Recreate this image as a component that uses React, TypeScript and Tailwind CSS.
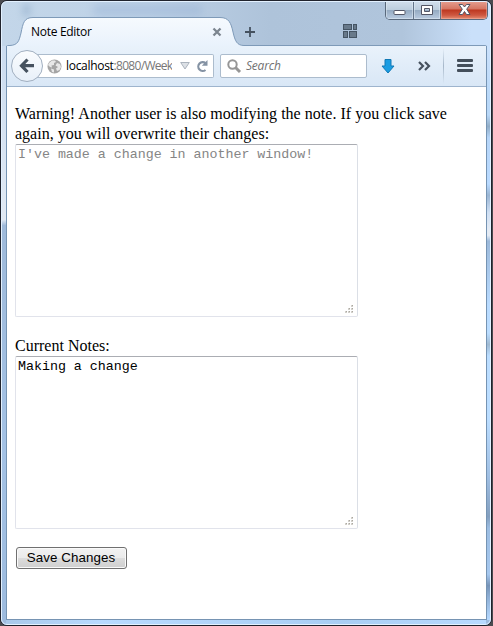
import React from "react";

const uiFont = "font-['Open_Sans','Noto_Sans',sans-serif]";

function Grip() {
  return (
    <svg className="absolute right-[3px] bottom-[2px]" width="9" height="9" shapeRendering="crispEdges">
      {[[6, 0], [3, 3], [6, 3], [0, 6], [3, 6], [6, 6]].map(([x, y]) => (
        <g key={`${x}-${y}`}>
          <rect x={x} y={y} width="2" height="2" fill="#d2d0cb" />
          <rect x={x + 1} y={y} width="1" height="1" fill="#aaa79f" />
        </g>
      ))}
    </svg>
  );
}

function NoteArea({ text, muted }: { text: string; muted?: boolean }) {
  return (
    <div
      className={`relative h-[173px] w-[343px] rounded-[2px] border border-[#e1e3eb] border-t-[#abadb3] border-r-[#dbdfe6] bg-white pt-[2px] pl-[2px] font-['Liberation_Mono',monospace] text-[13.333px] leading-[15px] tracking-[-0.02px] whitespace-pre ${muted ? "text-[#858585]" : "text-black"}`}
    >
      {text}
      <Grip />
    </div>
  );
}

function TabStrip() {
  return (
    <div className="relative h-[46px] shrink-0">
      <div className="absolute top-[5px] left-[94px] h-[10px] w-[108px] bg-[#8fabd3] opacity-40 blur-[4px]" />
      <div className="absolute top-[4px] left-[22px] h-[12px] w-[9px] bg-[#8ba8c7] opacity-40 blur-[3px]" />
      <svg className="absolute inset-0" width="493" height="46" fill="none">
        <defs>
          <linearGradient id="tab" x1="0" y1="0" x2="0" y2="1">
            <stop offset="0" stopColor="#f6fafe" />
            <stop offset="1" stopColor="#e9f2fc" />
          </linearGradient>
        </defs>
        <path d="M7 46 Q7 45.5 10 45.5 C18 45 19 41 21 33 C23 23 24 17.5 33 17.5 H220 C229 17.5 231 23 233 32 C235 41 237 45.5 244 45.5 V46 Z" fill="url(#tab)" />
        <path d="M6.5 46 Q6.5 45.5 10 45.5 C18 45 19 41 21 33 C23 23 24 17.5 33 17.5 H220 C229 17.5 231 23 233 32 C235 41 237 45.5 244 45.5 H484 Q486.500 45.500 486.500 46" stroke="#7e9ab8" />
        <path d="M213.500 28.500 l7 7 M220.500 28.500 l-7 7" stroke="#7c858f" strokeWidth="2.3" />
        <path d="M245 32 h10 M250 27 v10" stroke="#45515f" strokeWidth="1.8" />
        <g fill="#697a8b" stroke="#465564" shapeRendering="crispEdges">
          <rect x="343.500" y="24.500" width="8" height="5" />
          <rect x="353.500" y="24.500" width="3" height="5" />
          <rect x="343.500" y="31.500" width="4" height="6" />
          <rect x="349.500" y="31.500" width="7" height="6" />
        </g>
      </svg>
      <div className={`absolute top-[23px] left-[31px] text-[12px] leading-[18px] tracking-[-0.3px] text-black ${uiFont}`}>Note Editor</div>
      <WindowControls />
    </div>
  );
}

function WindowControls() {
  return (
    <div className="absolute top-0 left-[385px] flex h-[20px] w-[103px] overflow-hidden rounded-b-[5px] border border-t-0 border-[#59697c]">
      <div className="flex w-[28px] items-center justify-center border-r border-[#64758a] bg-[linear-gradient(#d5e1ee_0%,#bdcede_50%,#93a9c0_52%,#b9cbe0_100%)] shadow-[inset_0_0_0_1px_#e4edf680]">
        <svg width="13" height="14"><rect x="1" y="7.500" width="11" height="4" rx="1" fill="#fff" stroke="#535666" /></svg>
      </div>
      <div className="flex w-[27px] items-center justify-center border-r border-[#64758a] bg-[linear-gradient(#d5e1ee_0%,#bdcede_50%,#93a9c0_52%,#b9cbe0_100%)] shadow-[inset_0_0_0_1px_#e4edf680]">
        <svg width="13" height="12"><path d="M.5 1.500 h11 v9 h-11 Z M3.500 4.500 v3 h5 v-3 Z" fill="#fff" fillRule="evenodd" stroke="#535666" /></svg>
      </div>
      <div className="flex flex-1 items-center justify-center bg-[linear-gradient(#e8a698_0%,#d57562_48%,#bd3720_52%,#ce5841_80%,#e58e73_100%)] shadow-[inset_0_0_0_1px_#f3b3a880]">
        <svg width="13" height="11"><path d="M1 .5 h3.500 l2 2.500 2-2.500 H12 L8.700 5.200 12 10.500 H8.500 L6.500 7.500 4.500 10.500 H1 L4.300 5.200 Z" fill="#fff" stroke="#535666" /></svg>
      </div>
    </div>
  );
}

function Toolbar() {
  return (
    <div className={`flex h-[41px] shrink-0 items-center border-b border-[#9eb4cd] bg-[linear-gradient(#e9f2fb,#d9e7f6)] ${uiFont}`}>
      <div className="z-10 ml-[4px] flex size-[32px] shrink-0 items-center justify-center rounded-full border border-[#a1afc0] bg-[linear-gradient(#fafcfe,#e8f0f9)]">
        <svg width="16" height="16" fill="none"><path d="M8.500 1.500 L2.500 7.700 L8.500 14 M3 7.700 H15" stroke="#46525f" strokeWidth="3.200" /></svg>
      </div>
      <div className="-ml-[7px] flex h-[24px] w-[178px] shrink-0 items-center rounded-r-[2px] border border-l-0 border-[#acbccd] bg-white">
        <svg className="ml-[11px] shrink-0" width="15" height="15">
          <circle cx="7.500" cy="7.500" r="7" fill="#a5a5a5" />
          <path d="M2 4 L5 1.500 8 1.500 9 3 7 4 7 6 4.500 6.500 5 8.500 3 8 1 6 Z M10 4 L13 5 14 8 12.500 11 10 12 9 9.500 11 8 8.500 6.500 Z M4 9.500 L7 10.500 7 13.500 5 13 Z" fill="#e7e7e7" />
        </svg>
        <div className="ml-[4px] w-[106px] overflow-hidden text-[12px] leading-[18px] tracking-[-0.3px] whitespace-nowrap text-black">localhost<span className="tracking-[-0.7px] text-[#777]">:8080/Week</span></div>
        <svg className="ml-[8px] shrink-0" width="10" height="8"><path d="M.7.500 H9.300 L5 7 Z" fill="#dce0e5" stroke="#abb3bd" /></svg>
        <svg className="ml-[6px] shrink-0" width="13" height="13" fill="none"><path d="M9.500 3.200 A4.400 4.400 0 1 0 9.500 10" stroke="#8593a4" strokeWidth="2.200" /><path d="M11.500 0 V5.700 H5.800 Z" fill="#8593a4" /></svg>
      </div>
      <div className="ml-[6px] flex h-[24px] w-[147px] shrink-0 items-center rounded-[2px] border border-[#acbccd] bg-white">
        <svg className="ml-[6px]" width="15" height="15" fill="none" stroke="#969696"><circle cx="5.500" cy="5.500" r="4.200" strokeWidth="2" /><path d="M8.500 8.500 L13 13" strokeWidth="3" /></svg>
        <span className="ml-[4px] text-[12px] leading-[18px] tracking-[-0.2px] text-[#727272] italic">Search</span>
      </div>
      <svg className="ml-[14px] shrink-0" width="14" height="15"><path d="M4 .5 H10 V7 H13 L7 14 L1 7 H4 Z" fill="#1b9de2" stroke="#1279b5" /></svg>
      <svg className="ml-[23px] shrink-0" width="13" height="10" fill="none"><path d="M1 1 L5 5 L1 9 M7 1 L11 5 L7 9" stroke="#46515e" strokeWidth="2.200" /></svg>
      <div className="ml-[12px] h-[36px] w-px bg-[linear-gradient(transparent,#a6b7c9,transparent)]" />
      <div className="mb-[2px] ml-[13px] flex flex-col gap-[2px]">
        {[0, 1, 2].map((n) => <div key={n} className="h-[3px] w-[16px] rounded-[1px] bg-[#444f5b]" />)}
      </div>
    </div>
  );
}

export default function App() {
  return (
    <div className="h-[626px] w-[493px] overflow-hidden bg-[#4b4b50]">
      <div className="relative flex h-[626px] w-[492px] flex-col overflow-hidden rounded-[7px] border border-[#20232d] bg-[linear-gradient(90deg,#c3d6e9_0%,#bdd1e6_30%,#aec3da_55%,#b0c5dc_82%,#cae0fa_96%)]">
        <div className="-mt-px -ml-px h-[46px] w-[493px] shrink-0"><TabStrip /></div>
        <div className="flex h-[579px] shrink-0 bg-[linear-gradient(#cbdcf0_0%,#e1e9f3_30%,#9fbada_31%,#a4c2e5_70%,#9dbbde_100%)]">
          <div className="w-[5px] shrink-0" />
          <div className="flex h-[574px] w-[481px] shrink-0 flex-col border border-t-0 border-[#7694b3] bg-white">
            <Toolbar />
            <main className="px-[8px] pt-[17px] font-['Liberation_Serif',serif] text-[16px] leading-[20px] text-black">
              <p className="whitespace-nowrap"><span className="tracking-[0.02px]">Warning! Another user is also modifying the note. If you click save</span><br />again, you will overwrite their changes:</p>
              <NoteArea text="I've made a change in another window!" muted />
              <p className="mt-[19px]">Current Notes:</p>
              <NoteArea text="Making a change" />
              <button className="mt-[18px] ml-px block h-[22px] w-[111px] rounded-[3px] border border-[#707070] bg-[linear-gradient(#f2f2f2_0%,#ebebeb_48%,#dddddd_50%,#cfcfcf_100%)] pr-[1px] font-['Liberation_Sans',sans-serif] text-[13.333px] leading-[20px] tracking-[0.09px] whitespace-nowrap shadow-[inset_0_0_0_1px_#fafafa]">Save Changes</button>
            </main>
          </div>
          <div className="h-[574px] w-[4px] shrink-0 bg-[linear-gradient(#cbe1fb_0%,#b9d8f8_9%,#b9d8f8_12%,#91adc7_14%,#b6d5f8_16%,#b9daff_24%,#9ab5d3_26%,#cfdff3_29%,#e4ebf4_32%,#e4ebf4_33%,#9cb9da_34%,#b9dbff_45%,#bbddff_50%,#a0bad2_52%,#bbddff_54%,#bbddff_65%,#a0bfe3_75%,#839fbf_82%,#9cbde2_84%,#a6c8ef_92%,#7794b8_94%,#8eafd5_96%,#b6d9ff_100%)]" />
        </div>
        <div className="pointer-events-none absolute right-[5px] bottom-0 left-[5px] h-[5px] bg-[linear-gradient(90deg,#a9c9ea,#b8daff_20%,#a9cef4_70%,#b8daff)]" />
        <div className="pointer-events-none absolute inset-0 rounded-[6px] border border-[#e3f1ff]" />
      </div>
    </div>
  );
}
